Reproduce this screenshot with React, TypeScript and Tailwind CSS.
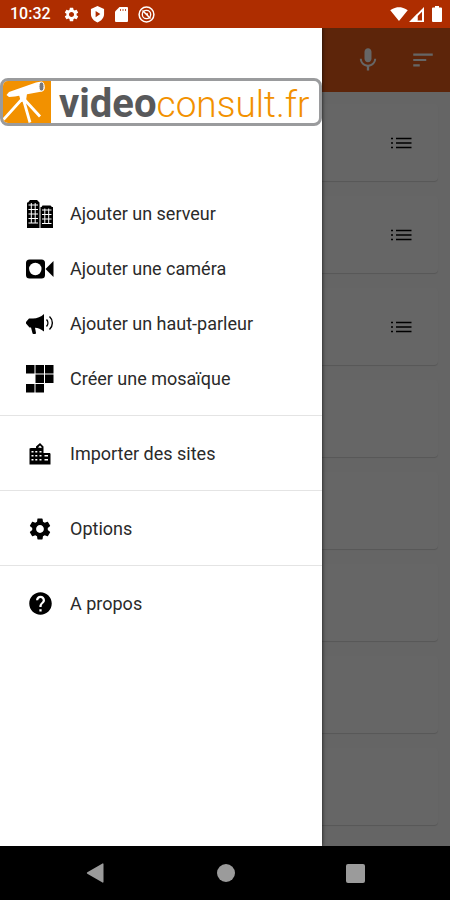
import type { ReactNode } from "react";
import { MdBatteryFull, MdHelp, MdMic, MdSettings, MdSignalWifi4Bar, MdSort } from "react-icons/md";

/* Status bar icons */

const ShieldIcon = () => (
  <svg viewBox="0 0 16 18" className="h-[17px] w-[15px]" aria-hidden="true">
    <path
      fill="currentColor"
      fillRule="evenodd"
      d="M8 0 15 3v5.500c0 4-3 7.500-7 9-4-1.500-7-5-7-9V3zM6 5.200v6.600L11 8.500z"
    />
  </svg>
);

const SdCardIcon = () => (
  <svg viewBox="0 0 13 15" className="h-[15px] w-[13px]" aria-hidden="true">
    <path fill="currentColor" d="M4.500 0H12a1 1 0 0 1 1 1v13a1 1 0 0 1-1 1H1a1 1 0 0 1-1-1V4.500z" />
    <path stroke="#ae2d00" strokeWidth=".8" d="M5.500 2v2M8 2v2M10.500 2v2" />
  </svg>
);

const DataSaverIcon = () => (
  <svg viewBox="0 0 17 17" className="h-[17px] w-[17px]" fill="none" stroke="currentColor" aria-hidden="true">
    <circle cx="8.500" cy="8.500" r="7.400" strokeWidth="1.500" />
    <circle cx="8.500" cy="8.500" r="4.200" strokeWidth="1.300" />
    <path strokeWidth="1.500" d="m4.500 4.500 8 8M8 8h2" />
  </svg>
);

const SignalIcon = () => (
  <svg viewBox="0 0 15 15" className="ml-px h-[15px] w-[15px]" aria-hidden="true">
    <path fill="currentColor" fillRule="evenodd" d="M15 0v15H0zM13 4.800 8.500 9.300v4.200H13z" />
    <path fill="currentColor" d="M8.500 6.500v7H2z" />
  </svg>
);

const BatteryIcon = () => (
  <svg viewBox="0 0 10 16" className="ml-2 h-4 w-[10px]" aria-hidden="true">
    <path fill="currentColor" d="M3 0h4v1.500h2a1 1 0 0 1 1 1V15a1 1 0 0 1-1 1H1a1 1 0 0 1-1-1V2.500a1 1 0 0 1 1-1h2z" />
  </svg>
);

/* Drawer icons */

const ServerIcon = () => (
  <svg viewBox="0 0 28 28" className="h-7 w-7" aria-hidden="true">
    <path fill="#000" d="M4 0h7l2.500 2.500V28H1V2.500h1zM16.500 5.500h8L26 7h1v21H14.500V7h1z" />
    <path
      stroke="#fff"
      strokeWidth="1.100"
      d="M2.500 5h9.500M2.500 9.500h9.500M2.500 14h9.500M2.500 18.500h9.500M2.500 23h9.500M16 10h9.500M16 14.500h9.500M16 19h9.500M16 23.500h9.500"
    />
    <path stroke="#fff" strokeWidth="1" d="M5.300 3v20M9.200 3v20M18.800 8.500v15M22.700 8.500v15" />
  </svg>
);

const CameraIcon = () => (
  <svg viewBox="0 0 28 20" className="h-5 w-7" aria-hidden="true">
    <rect x="0" y="0.500" width="19" height="19" rx="3.500" fill="#000" />
    <circle cx="9.300" cy="10" r="6.200" fill="#fff" />
    <path fill="#000" d="M27.500 2v16l-8-8z" />
  </svg>
);

const SpeakerIcon = () => (
  <svg viewBox="0 0 28 20" className="h-5 w-7" aria-hidden="true">
    <path
      fill="#000"
      d="M18 0v17.500c-3-2.500-6-3.500-9-3.800L10 19a1 1 0 0 1-1 1H7.500a1 1 0 0 1-1-.8L5 13.500H3.500L0 9.500V8l3-3.500h4C11 4.300 15 3 18 0z"
    />
    <path
      fill="none"
      stroke="#000"
      strokeWidth="1.400"
      d="M20.500 5.500c1.800 2 1.800 5 0 7M23.500 2.500c3.800 3.500 3.800 9.500 0 13"
    />
  </svg>
);

const MosaicIcon = () => (
  <svg viewBox="0 0 28 28" className="h-7 w-7" aria-hidden="true">
    <path
      fill="#000"
      d="M0 0h8.500v8.500H0zM9.500 0H18v8.500H9.500zM19 0h8.500v8.500H19zM9.500 9.500H18V18H9.500zM19 9.500h8.500V18H19zM0 19h8.500v8.500H0zM9.500 19H18v8.500H9.500z"
    />
  </svg>
);

const SitesIcon = () => (
  <svg viewBox="0 0 22 22" className="h-[22px] w-[22px]" aria-hidden="true">
    <path fill="#000" d="M.5 5.500 2 5h5V3.500L11 0l3.500 3.500V10H21l.5 1v10.500H.5z" />
    <path fill="#fff" d="M9 4.500 11 2.500l1.500 1.500v1z" />
    <path
      fill="#fff"
      d="M2.500 8h2v1.500h-2zM6.300 8h2v1.500h-2zM10.500 8h2v1.500h-2zM2.500 12h2v1.500h-2zM6.300 12h2v1.500h-2zM10.500 12h2v1.500h-2zM2.500 16h2v1.500h-2zM6.300 16h2v1.500h-2zM10.500 16h2v1.500h-2zM15.500 12h3.500v1.500h-3.500zM15.500 16h3.500v1.500h-3.500z"
    />
  </svg>
);

const ListIcon = () => (
  <svg viewBox="0 0 22 14" className="h-[14px] w-[22px]" aria-hidden="true">
    <path stroke="#000" strokeWidth="1.600" d="M1 2.500h2M1 7h2M1 11.500h2M6 2.500h15.500M6 7h15.500M6 11.500h15.500" />
  </svg>
);

const TelescopeIcon = () => (
  <svg viewBox="0 0 48 42" className="h-[42px] w-12 shrink-0" aria-hidden="true">
    <path fill="#f29100" d="M0 0h48v42H0z" />
    <path fill="#fff" d="M6 11 33 1.500c5-1.500 7-1 8 2s1 6-2 7L12 15.500 6 16l-2.500-2z" />
    <ellipse cx="38.500" cy="5.500" rx="2.500" ry="4.500" fill="#77787b" stroke="#fff" />
    <path stroke="#fff" strokeWidth="2.800" fill="none" d="M20 17 .5 38.500M20 17l7 24.500M20 17l17 18.500" />
    <path fill="#fff" d="m16 14 8-1.500-1 7.500-5 1z" />
  </svg>
);

type Item = { label: string; icon: ReactNode };

const sections: Item[][] = [
  [
    { label: "Ajouter un serveur", icon: <ServerIcon /> },
    { label: "Ajouter une caméra", icon: <CameraIcon /> },
    { label: "Ajouter un haut-parleur", icon: <SpeakerIcon /> },
    { label: "Créer une mosaïque", icon: <MosaicIcon /> },
  ],
  [{ label: "Importer des sites", icon: <SitesIcon /> }],
  [{ label: "Options", icon: <MdSettings className="h-[26px] w-[26px]" /> }],
  [{ label: "A propos", icon: <MdHelp className="h-[27px] w-[27px]" /> }],
];

// only the first cards hold a site, the others are still empty
const cards = [true, true, true, false, false, false, false, false];

const StatusBar = () => (
  <header className="flex h-7 shrink-0 items-center justify-between bg-[#ae2d00] pr-2 pl-[10px] text-white">
    <div className="flex items-center gap-3">
      <span className="text-base font-medium">10:32</span>
      <div className="flex items-center gap-[10px]">
        <MdSettings className="h-[17px] w-[17px]" />
        <ShieldIcon />
        <SdCardIcon />
        <DataSaverIcon />
      </div>
    </div>
    <div className="flex items-center">
      <MdSignalWifi4Bar className="h-[18px] w-[18px]" />
      <SignalIcon />
      <BatteryIcon />
    </div>
  </header>
);

const SiteList = () => (
  <div className="flex flex-1 flex-col bg-[#fdfdfd]">
    <div className="flex h-16 items-center justify-end gap-7 bg-[#e85c19] pr-[14px] text-white">
      <button type="button" aria-label="Recherche vocale">
        <MdMic className="h-7 w-7" />
      </button>
      <button type="button" aria-label="Trier">
        <MdSort className="h-[26px] w-[26px]" />
      </button>
    </div>
    <ul className="flex flex-col gap-[15px] p-3">
      {cards.map((filled, i) => (
        <li
          key={i}
          className="flex h-[77px] items-center justify-end rounded-sm bg-white pr-[26px] shadow-[0_1px_1px_rgba(0,0,0,0.15)]"
        >
          {filled && (
            <button type="button" aria-label="Détails du site">
              <ListIcon />
            </button>
          )}
        </li>
      ))}
    </ul>
  </div>
);

const Drawer = () => (
  <aside className="absolute inset-y-0 left-0 w-[322px] bg-white shadow-[0_0_4px_rgba(0,0,0,0.8)]">
    <div className="mt-[50px] flex h-12 items-center overflow-hidden rounded-lg border-[3px] border-[#9a9b9d]">
      <TelescopeIcon />
      <div className="pt-1 pl-2 leading-none whitespace-nowrap">
        <span className="text-[40px] font-bold text-[#58595b]">video</span>
        <span className="text-[37px] font-light text-[#f29100]">consult.fr</span>
      </div>
    </div>
    <nav className="mt-[60px]">
      {sections.map((items, i) => (
        <ul key={i} className="border-t border-[#e4e4e4] pt-[10px] pb-[9px] first:border-t-0 first:pt-0">
          {items.map(({ label, icon }) => (
            <li key={label}>
              <button type="button" className="flex h-[55px] w-full items-center gap-4 px-[26px] text-left">
                <span className="flex w-7 shrink-0 justify-center text-black">{icon}</span>
                <span className="text-lg text-[#2a2a2a]">{label}</span>
              </button>
            </li>
          ))}
        </ul>
      ))}
    </nav>
  </aside>
);

const NavigationBar = () => (
  <footer className="flex h-[54px] shrink-0 items-center justify-around bg-black px-[30px] text-[#9b9b9b]">
    <button type="button" aria-label="Retour">
      <svg viewBox="0 0 20 20" className="h-5 w-5">
        <path fill="currentColor" d="M17.500 1v18a.6.6 0 0 1-1 .5L1.300 10.800a1 1 0 0 1 0-1.600L16.500.5a.6.6 0 0 1 1 .5z" />
      </svg>
    </button>
    <button type="button" aria-label="Accueil">
      <span className="block h-[18px] w-[18px] rounded-full bg-current" />
    </button>
    <button type="button" aria-label="Applications">
      <span className="block h-[19px] w-[19px] rounded-xs bg-current" />
    </button>
  </footer>
);

const App = () => {
  return (
    <div className="flex min-h-screen flex-col font-[Roboto,sans-serif]">
      <StatusBar />
      <main className="relative flex flex-1 flex-col overflow-hidden">
        <SiteList />
        <div className="absolute inset-0 bg-black/60" />
        <Drawer />
      </main>
      <NavigationBar />
    </div>
  );
};

export default App;
